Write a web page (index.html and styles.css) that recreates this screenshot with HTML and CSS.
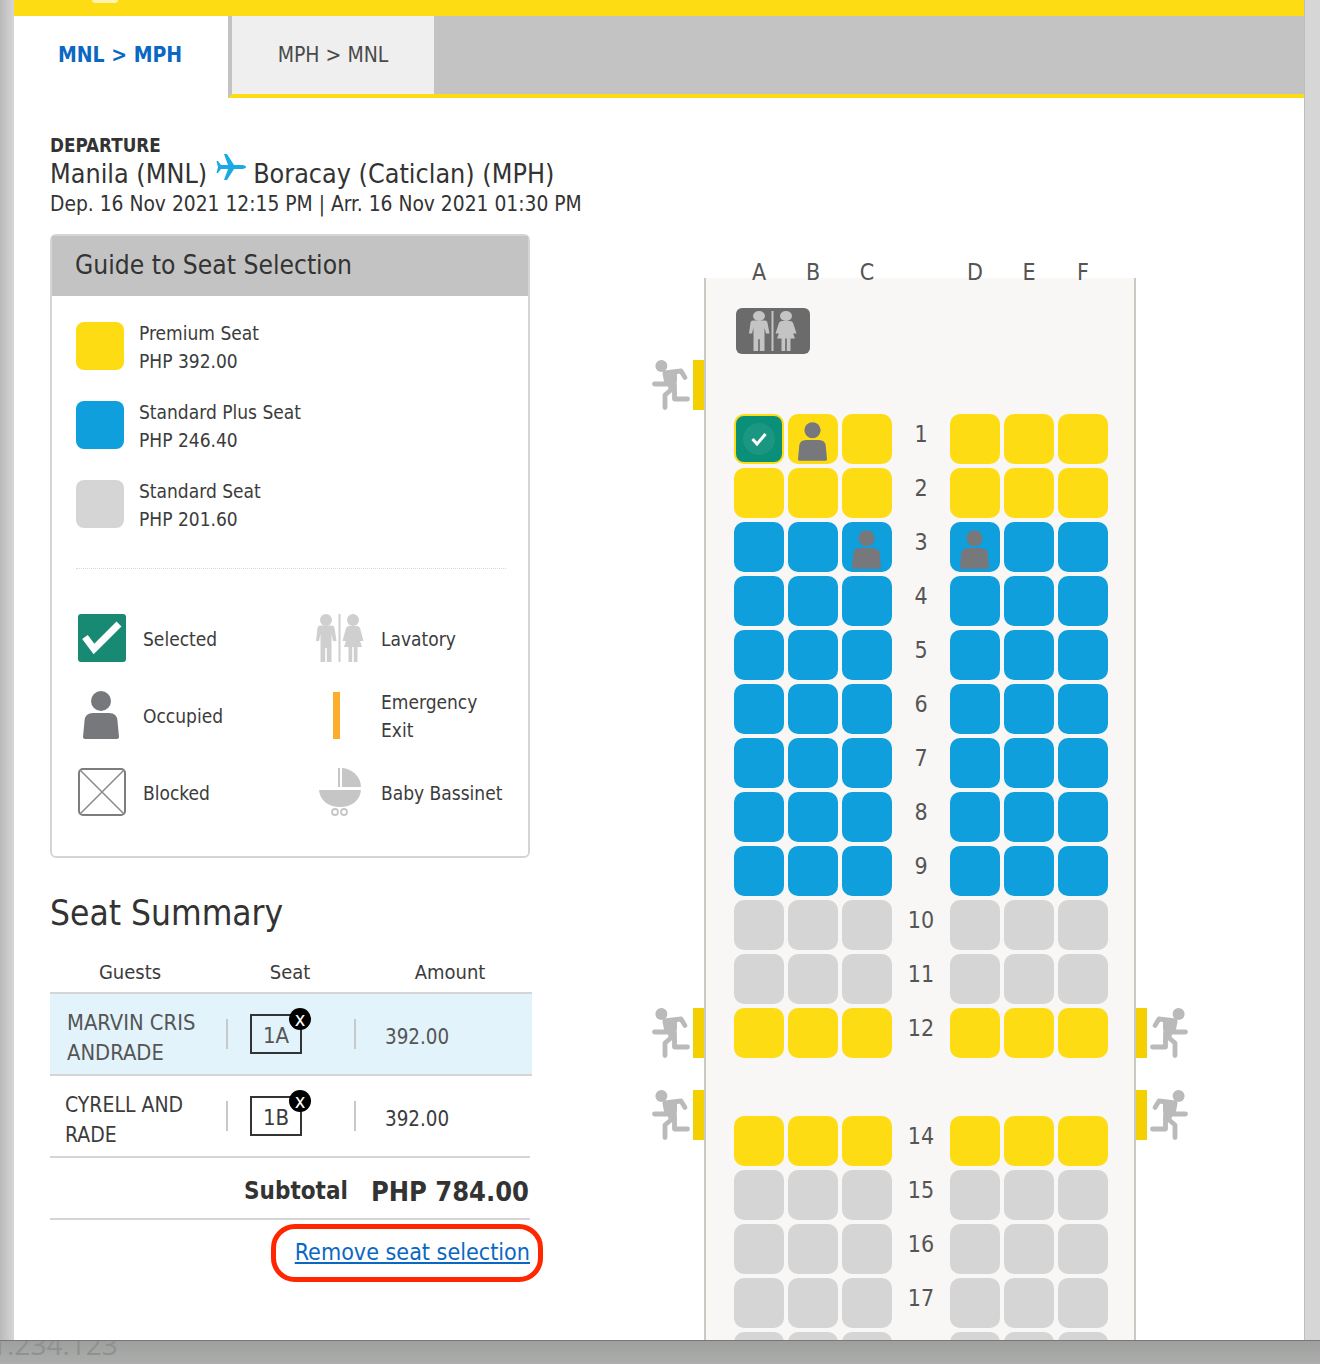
FILE: index.html
```html
<!DOCTYPE html>
<html lang="en">
<head>
<meta charset="utf-8">
<title>Seat Selection</title>
<link rel="stylesheet" href="styles.css">
</head>
<body>
<svg class="defs" width="0" height="0" aria-hidden="true">
  <symbol id="person" viewBox="0 0 36 48"><circle cx="18" cy="10" r="10"/><path d="M0 46 1.500 30Q2 22 10 22H26Q34 22 34.500 30L36 46Q36 48 34 48H2Q0 48 0 46Z"/></symbol>
  <symbol id="runner" viewBox="0 0 38 50">
    <circle cx="9.400" cy="6" r="6" fill="#bababa"/>
    <g fill="none" stroke="#bababa" stroke-width="4.800" stroke-linecap="round" stroke-linejoin="round">
      <path d="M13 13 29 11 33 17.500"/><path d="M2.500 24H15L13 14"/><path d="M22.500 26V39H35.500"/><path d="M20 29 13 35V47.500"/>
    </g>
    <path d="M11 13 25 11 25 20 24 30 17 30Z" fill="#bababa"/>
  </symbol>
  <symbol id="lav" viewBox="0 0 48 48" preserveAspectRatio="none">
    <circle cx="10" cy="6" r="6"/><circle cx="37" cy="6" r="6"/>
    <rect x="22.500" width="2" height="48"/>
    <path d="M4 11.500H16Q18 11.500 18.500 14L20.500 27H17L15.500 20V48H10.800V34H9.200V48H4.500V20L3 27H0L1.500 14Q2 11.500 4 11.500Z"/>
    <path d="M33 12H41Q43 12 44 14L47.500 27H44L42.500 22 46 33H41.500V48H37.800V33H36.200V48H32.500V33H28L31.500 22 30 27H26.500L30 14Q31 12 33 12Z"/>
  </symbol>
  <symbol id="pram" viewBox="0 0 42 48">
    <path d="M23 0A20 20 0 0 1 42 19H23Z"/><path d="M19 0H21V19H19Z"/>
    <path d="M0 22H42C41 33 32 39 21 39S1 33 0 22Z"/>
    <g fill="none" stroke="#c6c6c6" stroke-width="1.800"><circle cx="16" cy="44" r="3"/><circle cx="25" cy="44" r="3"/></g>
  </symbol>
</svg>
<div class="shell">
  <div class="topbar"><span class="logo-bit"></span></div>
  <nav class="tabs">
    <a class="tab tab-active">MNL &gt; MPH</a>
    <div class="tab-track">
      <a class="tab tab-other">MPH &gt; MNL</a>
    </div>
  </nav>
  <main class="main">
    <section class="left">
      <div class="dep-label">DEPARTURE</div>
      <h1 class="route">Manila (MNL)<svg class="plane" viewBox="0 0 30 26" width="30" height="26"><path d="M30 13C30 14.500 27 15 25 15H18L11 26H8L12 15H5L2 19H.5L2 13 .5 7H2L5 11H12L8 0H11L18 11H25C27 11 30 11.500 30 13Z"/></svg>Boracay (Caticlan) (MPH)</h1>
      <p class="times">Dep. 16 Nov 2021 12:15 PM | Arr. 16 Nov 2021 01:30 PM</p>

      <div class="guide">
        <h2 class="guide-title">Guide to Seat Selection</h2>
        <div class="prices">
          <div class="price"><span class="swatch premium"></span><div class="label">Premium Seat<br>PHP 392.00</div></div>
          <div class="price"><span class="swatch plus"></span><div class="label">Standard Plus Seat<br>PHP 246.40</div></div>
          <div class="price"><span class="swatch standard"></span><div class="label">Standard Seat<br>PHP 201.60</div></div>
        </div>
        <div class="dots"></div>
        <div class="keys">
          <div class="key"><span class="ico"><svg viewBox="0 0 48 48" width="48" height="48"><rect width="48" height="48" rx="3" fill="#188a74"/><path d="M7 23 16 35 41 10" fill="none" stroke="#fff" stroke-width="7"/></svg></span><span class="label">Selected</span></div>
          <div class="key"><span class="ico"><svg class="lav-key" width="48" height="48"><use href="#lav"/></svg></span><span class="label">Lavatory</span></div>
          <div class="key"><span class="ico"><svg class="person-key" width="36" height="48"><use href="#person"/></svg></span><span class="label">Occupied</span></div>
          <div class="key"><span class="ico"><svg viewBox="0 0 48 48" width="48" height="48"><rect x="17" y="1" width="7" height="47" fill="#fbae2c"/></svg></span><span class="label">Emergency<br>Exit</span></div>
          <div class="key"><span class="ico"><svg viewBox="0 0 48 48" width="48" height="48"><rect x="1" y="1" width="46" height="46" rx="4" fill="#fff" stroke="#7d7d7d" stroke-width="2"/><path d="M2 2 46 46M46 2 2 46" stroke="#8a8a8a" stroke-width="1.500"/></svg></span><span class="label">Blocked</span></div>
          <div class="key"><span class="ico"><svg class="pram-key" width="42" height="48"><use href="#pram"/></svg></span><span class="label">Baby Bassinet</span></div>
        </div>
      </div>

      <h2 class="summary-title">Seat Summary</h2>
      <div class="sum-head"><span>Guests</span><span>Seat</span><span>Amount</span></div>
      <div class="sum-row sum-row-on">
        <div class="guest guest-on">MARVIN CRIS<br>ANDRADE</div><i class="sep"></i>
        <div class="seat-tag">1A<b class="close">x</b></div><i class="sep"></i>
        <div class="amount">392.00</div>
      </div>
      <div class="sum-row">
        <div class="guest">CYRELL AND<br>RADE</div><i class="sep"></i>
        <div class="seat-tag">1B<b class="close">x</b></div><i class="sep"></i>
        <div class="amount">392.00</div>
      </div>
      <div class="subtotal"><span class="sub-label">Subtotal</span><span class="sub-value">PHP 784.00</span></div>
      <div class="remove"><a class="remove-link" href="#">Remove seat selection<span class="ring"></span></a></div>
    </section>

    <section class="map">
      <div class="letters grid"><span>A</span><span>B</span><span>C</span><span></span><span>D</span><span>E</span><span>F</span></div>
      <div class="cabin">
        <div class="exit exit-l exit-1"><svg width="38" height="50"><use href="#runner"/></svg><span class="exit-bar"></span></div>
        <div class="exit exit-l exit-2"><svg width="38" height="50"><use href="#runner"/></svg><span class="exit-bar"></span></div>
        <div class="exit exit-l exit-3"><svg width="38" height="50"><use href="#runner"/></svg><span class="exit-bar"></span></div>
        <div class="exit exit-r exit-2"><span class="exit-bar"></span><svg class="flip" width="38" height="50"><use href="#runner"/></svg></div>
        <div class="exit exit-r exit-3"><span class="exit-bar"></span><svg class="flip" width="38" height="50"><use href="#runner"/></svg></div>
        <div class="lavatory"><svg class="lav-map" width="48" height="40"><use href="#lav"/></svg></div>
        <div class="grid seats">
          <div class="s sel"><span class="halo"><svg viewBox="0 0 16 14" width="16" height="14"><path d="M1.500 7 6 12 14.500 2" fill="none" stroke="#fff" stroke-width="3"/></svg></span></div>
          <div class="s y occ"><svg width="29" height="39"><use href="#person"/></svg></div>
          <div class="s y"></div><div class="n">1</div><div class="s y"></div><div class="s y"></div><div class="s y"></div>

          <div class="s y"></div><div class="s y"></div><div class="s y"></div><div class="n">2</div><div class="s y"></div><div class="s y"></div><div class="s y"></div>

          <div class="s b"></div><div class="s b"></div><div class="s b occ"><svg width="29" height="39"><use href="#person"/></svg></div><div class="n">3</div><div class="s b occ"><svg width="29" height="39"><use href="#person"/></svg></div><div class="s b"></div><div class="s b"></div>

          <div class="s b"></div><div class="s b"></div><div class="s b"></div><div class="n">4</div><div class="s b"></div><div class="s b"></div><div class="s b"></div>
          <div class="s b"></div><div class="s b"></div><div class="s b"></div><div class="n">5</div><div class="s b"></div><div class="s b"></div><div class="s b"></div>
          <div class="s b"></div><div class="s b"></div><div class="s b"></div><div class="n">6</div><div class="s b"></div><div class="s b"></div><div class="s b"></div>
          <div class="s b"></div><div class="s b"></div><div class="s b"></div><div class="n">7</div><div class="s b"></div><div class="s b"></div><div class="s b"></div>
          <div class="s b"></div><div class="s b"></div><div class="s b"></div><div class="n">8</div><div class="s b"></div><div class="s b"></div><div class="s b"></div>
          <div class="s b"></div><div class="s b"></div><div class="s b"></div><div class="n">9</div><div class="s b"></div><div class="s b"></div><div class="s b"></div>

          <div class="s g"></div><div class="s g"></div><div class="s g"></div><div class="n">10</div><div class="s g"></div><div class="s g"></div><div class="s g"></div>
          <div class="s g"></div><div class="s g"></div><div class="s g"></div><div class="n">11</div><div class="s g"></div><div class="s g"></div><div class="s g"></div>

          <div class="s y"></div><div class="s y"></div><div class="s y"></div><div class="n">12</div><div class="s y"></div><div class="s y"></div><div class="s y"></div>
          <div class="row-gap"></div>
          <div class="s y"></div><div class="s y"></div><div class="s y"></div><div class="n">14</div><div class="s y"></div><div class="s y"></div><div class="s y"></div>

          <div class="s g"></div><div class="s g"></div><div class="s g"></div><div class="n">15</div><div class="s g"></div><div class="s g"></div><div class="s g"></div>
          <div class="s g"></div><div class="s g"></div><div class="s g"></div><div class="n">16</div><div class="s g"></div><div class="s g"></div><div class="s g"></div>
          <div class="s g"></div><div class="s g"></div><div class="s g"></div><div class="n">17</div><div class="s g"></div><div class="s g"></div><div class="s g"></div>
          <div class="s g"></div><div class="s g"></div><div class="s g"></div><div class="n"></div><div class="s g"></div><div class="s g"></div><div class="s g"></div>
        </div>
      </div>
    </section>
  </main>
</div>
<div class="dock"><span class="dock-text">1.234.123</span></div>
</body>
</html>
```
FILE: styles.css
```css
* { box-sizing: border-box; }
html, body { margin: 0; height: 100%; }
body {
  height: 1364px;
  overflow: hidden;
  background: linear-gradient(90deg, #b9b9b9 0, #d6d6d6 14px, #d6d6d6 100%);
  font-family: "DejaVu Sans Condensed", "DejaVu Sans", sans-serif;
  font-stretch: condensed;
  color: #3c3c3c;
}
.defs { position: absolute; }
.shell {
  margin: 0 15px 0 14px;
  height: 1364px;
  background: #fff;
  border-right: 1px solid #bdbdbd;
  overflow: hidden;
}
.topbar { height: 16px; background: #fedc14; position: relative; }
.logo-bit { position: absolute; left: 78px; top: 0; width: 26px; height: 3px; background: #fff3b0; border-radius: 0 0 8px 8px; }

.tabs { display: flex; height: 82px; }
.tab { font-size: 21px; display: block; }
.tab-active {
  width: 214px;
  padding: 26px 0 0 44px;
  line-height: 26px;
  color: #0a68c4;
  font-weight: 700;
}
.tab-track {
  flex: 1;
  background: #c3c3c3;
  border-left: 4px solid #c3c3c3;
  border-bottom: 4px solid #fedc14;
}
.tab-other {
  width: 202px;
  height: 78px;
  background: #efefef;
  text-align: center;
  padding-top: 26px;
  line-height: 26px;
  color: #4a4a4a;
}

.main { display: flex; padding-left: 36px; }
.left { width: 480px; padding-top: 38px; flex: none; }
.dep-label { font-size: 18.7px; font-weight: 700; line-height: 20px; color: #333; }
.route { margin: 0; height: 36px; font-size: 26.7px; font-weight: 400; line-height: 36px; color: #333; white-space: nowrap; }
.plane { fill: #1ba9e6; margin: -16px 7px -16px 9px; vertical-align: 19px; }
.times { margin: 0; font-size: 20.8px; line-height: 24px; color: #333; white-space: nowrap; }

.guide {
  margin-top: 18px;
  height: 624px;
  border: 2px solid #d5d5d5;
  border-radius: 6px;
}
.guide-title {
  margin: 0;
  height: 60px;
  background: #c3c3c3;
  padding-left: 23px;
  font-size: 26.2px;
  font-weight: 400;
  line-height: 58px;
  color: #333;
}
.prices { display: flex; flex-direction: column; gap: 23px; padding: 22px 0 0 24px; }
.price { display: flex; align-items: center; gap: 15px; height: 56px; font-size: 19px; line-height: 28px; }
.label { padding-top: 2px; }
.swatch { width: 48px; height: 48px; border-radius: 8px; flex: none; }
.premium { background: #fedc14; }
.plus { background: #0e9fdc; }
.standard { background: #d5d5d5; }
.dots { margin: 36px 0 0 24px; width: 430px; border-top: 1px dotted #d8d8d8; }
.keys {
  display: grid;
  grid-template-columns: 238px 1fr;
  row-gap: 25px;
  padding: 45px 0 0 26px;
  font-size: 19px;
  line-height: 28px;
}
.key { display: flex; align-items: center; gap: 17px; height: 48px; }
.key:nth-child(3), .key:nth-child(4) { height: 56px; }
.ico { width: 48px; height: 48px; flex: none; display: flex; justify-content: center; }
.lav-key { fill: #cfcfcf; }
.person-key { fill: #77787b; margin-left: -2px; }
.pram-key { fill: #c6c6c6; }

.summary-title { margin: 33px 0 0; font-size: 35px; font-weight: 400; line-height: 44px; color: #333; }
.sum-head {
  display: grid;
  grid-template-columns: repeat(3, 160px);
  margin-top: 24px;
  padding-bottom: 7px;
  text-align: center;
  font-size: 20px;
  line-height: 26px;
}
.sum-row {
  width: 482px;
  height: 82px;
  display: flex;
  align-items: center;
  border-top: 2px solid #d5d5d5;
  font-size: 21px;
  line-height: 30px;
}
.sum-row-on { background: #e2f3fb; color: #555; background-clip: padding-box; }
.guest { width: 176px; padding: 8px 0 0 15px; }
.guest-on { padding-left: 17px; font-size: 21.800px; }
.sep { width: 2px; height: 30px; background: #c8c8c8; flex: none; }
.seat-tag {
  position: relative;
  width: 52px;
  height: 40px;
  margin: 0 52px 0 22px;
  border: 2px solid #333;
  text-align: center;
  font-size: 22px;
  line-height: 40px;
}
.close {
  position: absolute;
  top: -8px;
  right: -11px;
  width: 22px;
  height: 22px;
  border-radius: 50%;
  background: #000;
  color: #fff;
  font-size: 20px;
  font-weight: 400;
  line-height: 22px;
  text-align: center;
}
.amount { margin-left: 29px; padding-top: 6px; font-size: 20.400px; }
.subtotal {
  width: 480px;
  height: 64px;
  padding: 6px 1px 0 0;
  border-top: 2px solid #d5d5d5;
  border-bottom: 2px solid #d5d5d5;
  display: flex;
  justify-content: flex-end;
  align-items: center;
  gap: 23px;
  font-weight: 700;
  color: #333;
}
.sub-label { font-size: 24px; }
.sub-value { font-size: 27px; }
.remove { text-align: right; padding-top: 18px; }
.remove-link {
  position: relative;
  display: inline-block;
  font-size: 23.100px;
  line-height: 28px;
  color: #0a68c4;
  text-decoration: underline;
}
.ring {
  position: absolute;
  top: -14px;
  bottom: -16px;
  left: -24px;
  right: -13px;
  border: 5px solid #ff2600;
  border-radius: 24px;
}

.map { margin-left: 174px; padding-top: 163px; flex: none; width: 432px; }
.grid { display: grid; grid-template-columns: repeat(7, 50px); gap: 4px; }
.letters {
  position: relative;
  z-index: 1;
  padding-left: 30px;
  margin-bottom: -5px;
  text-align: center;
  font-size: 23px;
  line-height: 22px;
  color: #555;
}
.cabin {
  position: relative;
  width: 432px;
  height: 1200px;
  padding: 30px 0 0 28px;
  background: #f8f7f5;
  border-left: 2px solid #ccc9c2;
  border-right: 2px solid #ccc9c2;
}
.lavatory {
  width: 74px;
  height: 46px;
  margin-left: 2px;
  background: #6b6b6b;
  border-radius: 6px;
  display: flex;
  align-items: center;
  justify-content: center;
}
.lav-map { fill: #c4c4c4; }
.seats { margin-top: 60px; grid-auto-rows: 50px; }
.s { border-radius: 10px; }
.y { background: #fedc14; }
.b { background: #0e9fdc; }
.g { background: #d5d5d5; }
.occ { display: flex; justify-content: center; align-items: flex-end; padding: 0 2px 3px 0; fill: #77787b; }
.sel {
  background: #0a8f78;
  border: 2px solid #fedc14;
  display: flex;
  align-items: center;
  justify-content: center;
}
.halo {
  width: 32px;
  height: 32px;
  border-radius: 50%;
  background: rgba(255, 255, 255, .07);
  display: flex;
  align-items: center;
  justify-content: center;
}
.n { text-align: center; font-size: 23px; line-height: 40px; color: #555; }
.row-gap { grid-column: 1 / -1; }
.exit { position: absolute; display: flex; gap: 3px; height: 50px; }
.exit-l { left: -54px; }
.exit-r { left: 430px; }
.exit-1 { top: 82px; }
.exit-2 { top: 730px; }
.exit-3 { top: 812px; }
.exit-bar { width: 11px; height: 50px; background: #f5d000; }
.flip { transform: scaleX(-1); }

.dock {
  position: fixed;
  left: 0;
  right: 0;
  bottom: 0;
  height: 24px;
  overflow: hidden;
  background: linear-gradient(180deg, #9e9f9e, #acaeac);
  border-top: 1px solid #777;
}
.dock-text {
  position: absolute;
  left: -9px;
  top: -16px;
  font-family: "Open Sans", sans-serif;
  font-stretch: normal;
  font-size: 28px;
  line-height: 38px;
  color: #8f9191;
}
```
